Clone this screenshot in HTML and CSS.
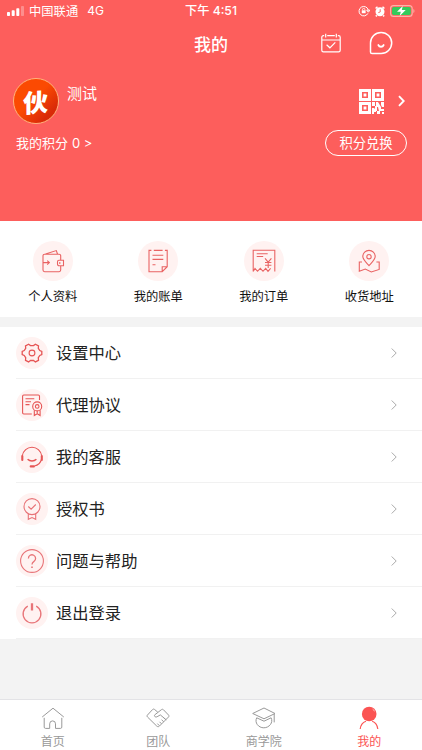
FILE: index.html
```html
<!DOCTYPE html>
<html lang="zh-CN">
  <head>
    <meta charset="UTF-8" />
    <meta name="viewport" content="width=device-width, initial-scale=1.0" />
    <title>我的</title>
    <link rel="stylesheet" href="styles.css" />
  </head>
  <body>
    <div class="page">
      <header class="header">
        <!-- 状态栏 -->
        <div class="status-bar">
          <div class="status-left">
            <svg class="signal" width="17" height="10" viewBox="0 0 17 10" fill="#fff">
              <rect x="0" y="6" width="3" height="4" rx="0.8" />
              <rect x="4.7" y="4.3" width="3" height="5.7" rx="0.8" />
              <rect x="9.3" y="2.2" width="3" height="7.8" rx="0.8" />
              <rect x="14" y="0" width="3" height="10" rx="0.8" opacity="0.3" />
            </svg>
            <span>中国联通</span>
            <span class="network">4G</span>
          </div>
          <div class="status-time">下午 4:51</div>
          <div class="status-right">
            <svg width="12" height="12" viewBox="0 0 12 12" fill="none" stroke="#fff">
              <path d="M9.9 8.4A4.7 4.7 0 1 1 10.3 5M8.7 5.2h3.2l-1.6 2z" />
              <rect x="3.8" y="5.3" width="3.8" height="2.9" fill="#fff" stroke="none" />
              <path d="M4.5 5.3V4.6a1.2 1.2 0 0 1 2.4 0v.7" stroke-width="0.8" />
            </svg>
            <svg width="10" height="11" viewBox="0 0 10 11" fill="none">
              <circle cx="5" cy="5.8" r="4.5" fill="#fff" />
              <path d="M.6 2.5L2.5.7M9.4 2.5L7.5.7M1.8 9.4L.8 10.4M8.2 9.4l1 1" stroke="#fff" stroke-width="1.5" />
              <path d="M5.2 3.2V6L3.3 6.6" stroke="#fd5e5c" stroke-width="0.9" />
            </svg>
            <svg width="25" height="12" viewBox="0 0 25 12">
              <rect x="0.6" y="0.6" width="21.6" height="10.8" rx="3" fill="none" stroke="#ffb3a8" stroke-width="1.1" />
              <rect x="2" y="2" width="18.8" height="8" rx="1.8" fill="#35ca5b" />
              <path d="M23.4 4v4c1.4-.8 1.4-3.2 0-4z" fill="#ffb3a8" />
              <path d="M12.8 1L7 6.8h3.8L9.7 11l6-6h-3.9z" fill="#fff" />
            </svg>
          </div>
        </div>

        <!-- 标题栏 -->
        <div class="nav-bar">
          <h1>我的</h1>
          <div class="nav-icons">
            <svg width="20" height="20" viewBox="0 0 20 20" fill="none" stroke="#fff" stroke-width="1.2">
              <path d="M3.2 2.6H2.4A1.6 1.6 0 0 0 .8 4.2v13a1.6 1.6 0 0 0 1.6 1.6h15.2a1.6 1.6 0 0 0 1.6-1.6v-13a1.6 1.6 0 0 0-1.6-1.6h-.8M6.2 2.6h7.6M.8 7h18.4M4.7.8v3.6M15.3.8v3.6M5.6 11.8l3.3 3 5.4-5.4" />
            </svg>
            <svg width="24" height="24" viewBox="0 0 24 24" fill="none" stroke="#fff" stroke-width="1.5" stroke-linecap="round" stroke-linejoin="round">
              <path d="M1.5 21V12A10.6 10.6 0 1 1 12 22.6H3.1A1.6 1.6 0 0 1 1.5 21z" />
              <path d="M9.4 14.1c1 2.2 4.2 2.2 5.2 0" stroke-width="1.9" />
            </svg>
          </div>
        </div>

        <!-- 用户信息 -->
        <div class="user">
          <div class="avatar"><span>伙</span></div>
          <div class="user-name">测试</div>
          <div class="user-links">
            <svg width="25" height="25" viewBox="0 0 25 25" fill="#fff">
              <path fill-rule="evenodd" d="M0 0h12v12H0zM3 3v6h6V3zM13 0h12v12H13zM16 3v6h6V3zM0 13h12v12H0zM3 16v6h6v-6z" />
              <path d="M4.6 4.6h2.8v2.8H4.6zM17.6 4.6h2.8v2.8h-2.8zM4.6 17.6h2.8v2.8H4.6z" />
              <path d="M13 13h3v4h-3zM17 13h2l3 5v4h-2l-1-4h-2zM22 13h3v5h-2l-1-2zM13 19h2l2 2v2h-2v2h-2zM16 17h2v5h-2zM18 22h3v3h-3zM22 20h3v2h-3zM23 23h2v2h-2z" />
            </svg>
            <svg width="7" height="12" viewBox="0 0 7 12" fill="none" stroke="#fff" stroke-width="1.9">
              <path d="M1 1.2L5.7 6 1 10.8" />
            </svg>
          </div>
        </div>

        <div class="points">
          <span>我的积分 <span class="points-num">0 &gt;</span></span>
          <a class="exchange-btn">积分兑换</a>
        </div>
      </header>

      <!-- 快捷入口 -->
      <nav class="shortcuts">
        <a class="shortcut">
          <svg class="shortcut-icon" viewBox="0 0 40 40">
            <path d="M27.7 19v-4.2a1.6 1.6 0 0 0-1.6-1.6H11.6A1.6 1.6 0 0 0 10 14.8v14.3a1.6 1.6 0 0 0 1.6 1.6h14.5a1.6 1.6 0 0 0 1.6-1.6V25M12.5 13l10.8-3.4 1.2 3.4M10 21.6h6.3M14.2 19.6l2.2 2-2.2 2" />
            <path d="M30.5 19.3H26a1.5 1.5 0 0 0-1.5 1.5v2.4a1.5 1.5 0 0 0 1.5 1.5h4.5zM26.8 21v2" />
          </svg>
          <span>个人资料</span>
        </a>
        <a class="shortcut">
          <svg class="shortcut-icon" viewBox="0 0 40 40">
            <path d="M13.4 9.4H11v21.3h13.2l5-5V9.4h-2.3M15.8 9.4h8.8M24.2 30.7v-5h5M14.5 14.2h10.8M14.5 18.4h10.8M14.5 23.8h3" />
          </svg>
          <span>我的账单</span>
        </a>
        <a class="shortcut">
          <svg class="shortcut-icon" viewBox="0 0 40 40">
            <path d="M9.2 30.5V9.2h21.6v21.3M9.2 30.5l1.8-3 2.5 2.8 2.8-3 2.7 3 2.7-3 2.3 3 2.6-3M12.7 12.7h11M12.7 15.5h6.5M21 17.3l3.2 3.8 3.2-3.8M24.2 21v6M21 21.5h6.4M21 24.2h6.4" />
          </svg>
          <span>我的订单</span>
        </a>
        <a class="shortcut">
          <svg class="shortcut-icon" viewBox="0 0 40 40">
            <path d="M20 24.6c-2.8-3.1-6.2-5.9-6.2-9a6.2 6.2 0 0 1 12.4 0c0 3.1-3.4 5.9-6.2 9z" />
            <circle cx="20" cy="15.7" r="2.2" />
            <path d="M13 21h-2.7v9.3l6-2.2 6 2.8 7.9-2.5V21h-2.8" />
          </svg>
          <span>收货地址</span>
        </a>
      </nav>

      <!-- 菜单列表 -->
      <ul class="menu">
        <li class="menu-item">
          <svg class="menu-icon" viewBox="0 0 32 32">
            <path d="M12.6 7.2l1.9 1.4h3l1.9-1.4 3.1 1.6-.2 2.5 1.5 2.3 2 .9v3l-2 .9-1.5 2.3.2 2.6-3.1 1.6-1.9-1.4h-3l-1.9 1.4-3.1-1.6.2-2.6-1.5-2.3-2-.9v-3l2-.9 1.5-2.3-.2-2.5z" stroke-width="1.3" />
            <circle cx="16" cy="16" r="2.9" />
          </svg>
          <span>设置中心</span>
          <svg class="arrow" viewBox="0 0 6 10"><path d="M.7.5L5.2 5 .7 9.5" /></svg>
        </li>
        <li class="menu-item">
          <svg class="menu-icon" viewBox="0 0 32 32">
            <path d="M23.5 11V7.2a1.2 1.2 0 0 0-1.2-1.2H7.8a1.2 1.2 0 0 0-1.2 1.2v16.6A1.2 1.2 0 0 0 7.8 25h8M9.5 9.7h8.8M9.5 12.7h5.5M9.5 15.6h4" />
            <circle cx="21.2" cy="17.4" r="4.5" />
            <circle cx="21.2" cy="17.4" r="1.8" />
            <path d="M18.3 21.2v5.3l2.9-1.8 2.9 1.8v-5.3M21.2 22v2.7" />
          </svg>
          <span>代理协议</span>
          <svg class="arrow" viewBox="0 0 6 10"><path d="M.7.5L5.2 5 .7 9.5" /></svg>
        </li>
        <li class="menu-item">
          <svg class="menu-icon" viewBox="0 0 32 32">
            <path d="M6.4 14.5a9.7 9.7 0 0 1 19.2 0M25.6 18c-.9 3.5-3.5 6.4-7.2 7" />
            <path d="M6.3 15v4M25.8 15v4M14.7 25.4h3.2" stroke-width="2.1" stroke-linecap="round" />
            <path d="M11.6 18.3c2.5 2.2 6.3 2.2 8.8 0" stroke-width="1.5" />
          </svg>
          <span>我的客服</span>
          <svg class="arrow" viewBox="0 0 6 10"><path d="M.7.5L5.2 5 .7 9.5" /></svg>
        </li>
        <li class="menu-item">
          <svg class="menu-icon light" viewBox="0 0 32 32">
            <circle cx="16" cy="13.6" r="8" />
            <path d="M12.3 13.5l2.8 2.7 4.7-4.7M12.3 20.7v5.6l3.7-1.7 3.7 1.7v-5.6" />
          </svg>
          <span>授权书</span>
          <svg class="arrow" viewBox="0 0 6 10"><path d="M.7.5L5.2 5 .7 9.5" /></svg>
        </li>
        <li class="menu-item">
          <svg class="menu-icon light" viewBox="0 0 32 32">
            <circle cx="16" cy="16" r="11.4" />
            <path d="M12.4 13.4a3.6 3.6 0 1 1 5.6 3c-1.3.8-2 1.4-2 3.1" stroke-width="1.3" />
            <path d="M16 21.4V23" stroke-width="1.6" />
          </svg>
          <span>问题与帮助</span>
          <svg class="arrow" viewBox="0 0 6 10"><path d="M.7.5L5.2 5 .7 9.5" /></svg>
        </li>
        <li class="menu-item">
          <svg class="menu-icon light" viewBox="0 0 32 32">
            <path d="M11.8 9.1a8.9 8.9 0 1 0 8.4 0" stroke-width="1.3" />
            <path d="M16 6.2v7.3" stroke-width="2.3" />
          </svg>
          <span>退出登录</span>
          <svg class="arrow" viewBox="0 0 6 10"><path d="M.7.5L5.2 5 .7 9.5" /></svg>
        </li>
      </ul>

      <!-- 底部导航 -->
      <footer class="tab-bar">
        <a class="tab">
          <svg class="tab-icon" viewBox="0 0 24 24">
            <path d="M1.2 11L12 2.2 22.8 11M3.2 11.8v9.3c0 .8.5 1.3 1.3 1.3h4.2v-4.6a2.9 2.9 0 0 1 5.8 0v4.6h5c.8 0 1.3-.5 1.3-1.3v-9.3" />
          </svg>
          <span>首页</span>
        </a>
        <a class="tab">
          <svg class="tab-icon" viewBox="0 0 24 24">
            <path d="M11.8 6.2L8.6 3.5c-.7-.6-1.4-.6-2 0L1.5 9c-.6.7-.6 1.3 0 2l9.2 9c.9.9 1.8.9 2.7.1l9-9c.7-.7.7-1.4.1-2.1l-5.1-5.3c-.6-.6-1.4-.6-2 0L8.7 8.9c-1 1.6 1.2 3 3.2 1.4l2.4-1.4 6 5M13.5 15.8l2 2M15.6 13.8l2.2 2M17.5 11.6l2.1 2M11.4 17.6l1.8 2" />
          </svg>
          <span>团队</span>
        </a>
        <a class="tab">
          <svg class="tab-icon" viewBox="0 0 24 24">
            <path d="M.7 7.5L12 2l11 5.5-11 5.3zM22.2 8v8.4M4.7 11.8c-2.4 4.8 1.7 10 7.1 10s9.7-5.2 7.3-10L12 15.2z" />
          </svg>
          <span>商学院</span>
        </a>
        <a class="tab active">
          <svg class="tab-icon" viewBox="0 0 24 24">
            <circle cx="12.2" cy="8" r="7.3" fill="#fb5453" stroke="none" />
            <path d="M3.2 23c.4-4.1 2.5-6.6 5.8-7.8M20.8 23c-.4-4.1-2.3-6.6-5.6-7.8" stroke-width="1.2" />
            <path d="M15.6 3.1c1 .6 1.6 1.3 1.9 2.3" stroke="#ffc0be" stroke-width="0.9" />
          </svg>
          <span>我的</span>
        </a>
      </footer>
    </div>
  </body>
</html>
```
FILE: styles.css
```css
/* 基本样式 */
* {
  margin: 0;
  padding: 0;
  box-sizing: border-box;
}

body {
  background-color: #f3f3f3;
  color: #222;
  font-family: "Noto Sans CJK SC", sans-serif;
}

svg {
  display: block;
  flex-shrink: 0;
}

.page {
  display: flex;
  flex-direction: column;
  height: 750px;
}

/* 头部 */
.header {
  height: 221px;
  background-color: #fd5e5c;
  color: #fff;
}

.status-bar {
  display: grid;
  grid-template-columns: 1fr auto 1fr;
  align-items: center;
  height: 22px;
  padding: 0 7px;
  font-size: 12.3px;
  line-height: 22px;
}

.status-left,
.status-right {
  display: flex;
  align-items: center;
}

.signal {
  margin-right: 5px;
}

.network {
  margin-left: 9px;
  font-size: 12px;
  font-family: Inter, sans-serif;
}

.status-time {
  font-size: 12.2px;
  font-weight: 500;
  font-family: Inter, "Noto Sans CJK SC", sans-serif;
}

.status-right {
  justify-content: flex-end;
  gap: 5px;
}

.nav-bar {
  display: grid;
  grid-template-columns: 1fr auto 1fr;
  align-items: center;
  height: 42px;
  padding: 0 29px;
}

.nav-bar h1 {
  grid-column: 2;
  font-size: 17px;
  font-weight: 500;
}

.nav-icons {
  display: flex;
  align-items: center;
  justify-content: flex-end;
  gap: 28px;
}

/* 用户信息 */
.user {
  display: flex;
  align-items: center;
  height: 46px;
  margin-top: 14px;
  padding: 0 17px 0 13px;
}

.avatar {
  display: flex;
  align-items: center;
  justify-content: center;
  width: 46px;
  height: 46px;
  border: 1.5px solid #ffb37b;
  border-radius: 50%;
  background: linear-gradient(135deg, #fb4a02 45%, #d92a08 80%);
}

.avatar span {
  font-size: 25px;
  font-weight: 900;
  line-height: 1;
  transform: skewY(-5deg);
}

.user-name {
  align-self: flex-start;
  margin-left: 8px;
  font-size: 15px;
  line-height: 29px;
}

.user-links {
  display: flex;
  align-items: center;
  gap: 14px;
  margin-left: auto;
}

.points {
  display: flex;
  align-items: center;
  justify-content: space-between;
  margin-top: 6px;
  padding: 0 15px 0 16px;
  font-size: 13px;
  line-height: 24px;
}

.points-num {
  margin-left: 1px;
  font-family: Inter, sans-serif;
}

.exchange-btn {
  width: 82px;
  height: 26px;
  border: 1px solid #fff;
  border-radius: 13px;
  font-size: 13.3px;
  line-height: 24px;
  text-align: center;
}

/* 快捷入口 */
.shortcuts {
  display: grid;
  grid-template-columns: repeat(4, 1fr);
  height: 96px;
  padding-top: 20px;
  background-color: #fff;
}

.shortcut {
  display: flex;
  flex-direction: column;
  align-items: center;
  color: #111;
  font-size: 12.3px;
  line-height: 18px;
}

.shortcut-icon {
  width: 40px;
  height: 40px;
  margin-bottom: 6px;
  border-radius: 50%;
  background-color: #fff2f1;
  fill: none;
  stroke: #e96363;
  stroke-width: 1.1;
}

/* 菜单列表 */
.menu {
  margin-top: 10px;
  padding-left: 16px;
  background-color: #fff;
  list-style: none;
}

.menu-item {
  display: flex;
  align-items: center;
  height: 52px;
  padding-right: 25px;
  border-bottom: 1px solid #f1f1f1;
  font-size: 16.3px;
}

.menu-item span {
  padding-bottom: 2px;
}

.menu-icon {
  width: 32px;
  height: 32px;
  margin-right: 8px;
  border-radius: 50%;
  background-color: #fff2f1;
  fill: none;
  stroke: #e65555;
  stroke-width: 1.1;
}

.menu-icon.light {
  stroke: #e87478;
}

.arrow {
  width: 6px;
  height: 10px;
  margin-left: auto;
  fill: none;
  stroke: #aaa;
  stroke-width: 1;
}

/* 底部导航 */
.tab-bar {
  display: grid;
  grid-template-columns: repeat(4, 1fr);
  height: 51px;
  margin-top: auto;
  padding-top: 6px;
  border-top: 1px solid #e3e3e6;
  background-color: #fff;
}

.tab {
  display: flex;
  flex-direction: column;
  align-items: center;
  color: #999;
  font-size: 12px;
  line-height: 18px;
}

.tab-icon {
  width: 24px;
  height: 24px;
  margin-bottom: 2px;
  fill: none;
  stroke: #999;
  stroke-width: 1;
}

.tab.active {
  color: #fb5453;
}

.tab.active .tab-icon {
  stroke: #fb5453;
}
```
